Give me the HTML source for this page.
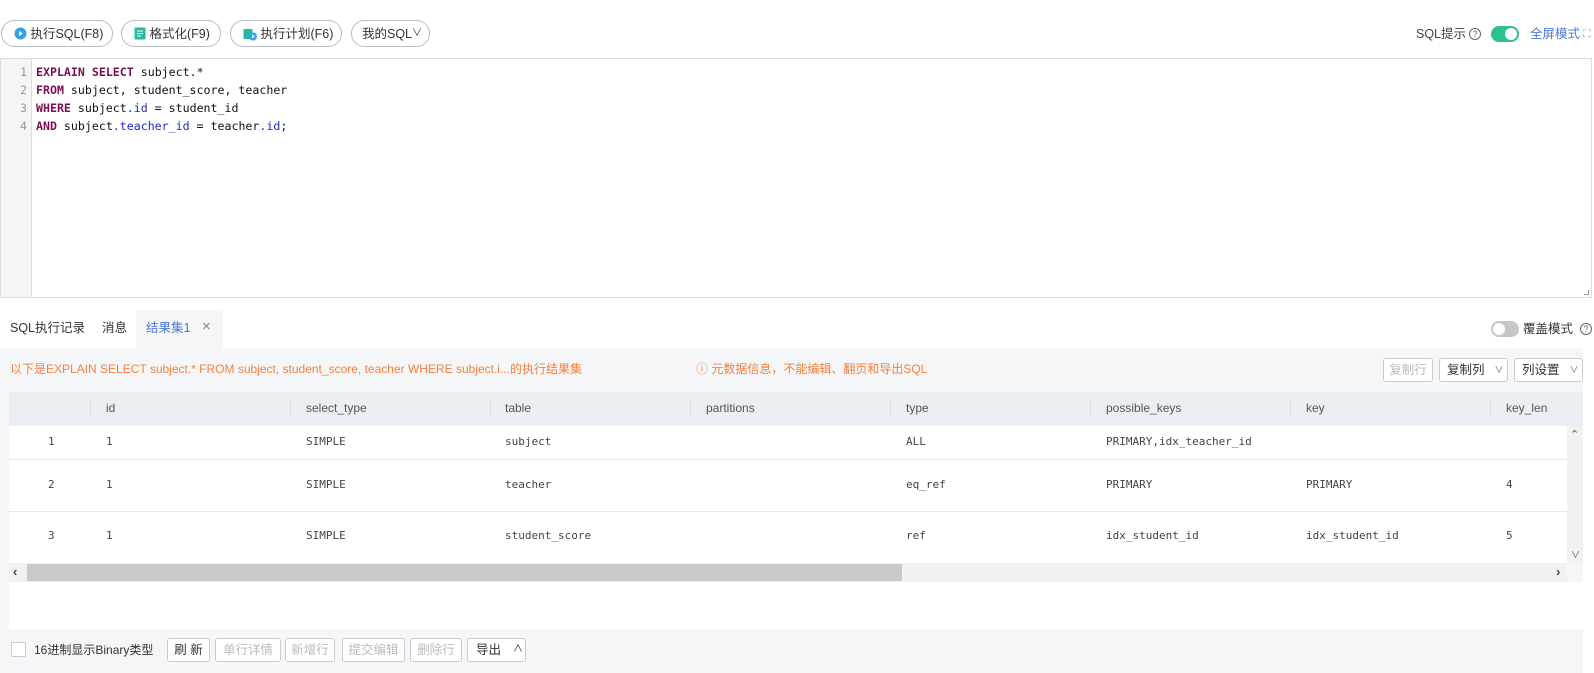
<!DOCTYPE html><html><head><meta charset="utf-8"><style>
*{box-sizing:border-box;margin:0;padding:0}
body{width:1594px;height:673px;background:#fff;font-family:"Liberation Sans","Noto Sans CJK SC",sans-serif;font-size:12px;color:#333;position:relative;overflow:hidden}
.a{position:absolute;white-space:nowrap;line-height:14px}
.btn{position:absolute;top:20px;height:27px;border:1px solid #b8bcc4;border-radius:14px;font-size:12.5px;color:#333;display:flex;align-items:center;padding-left:12px;line-height:14px}
.editor{left:0;top:58px;width:1592px;height:240px;border:1px solid #ddd}
.gut{position:absolute;left:0;top:0;width:31px;height:100%;background:#f5f5f5;border-right:1px solid #ddd}
.code{font-family:"DejaVu Sans Mono","Liberation Mono",monospace;font-size:11.6px;line-height:18px}
.k{color:#7a0f52;font-weight:bold}.b{color:#1a2bc8}
.sb{position:absolute;height:24px;border:1px solid #c8ccd2;border-radius:3px;background:#fff;display:flex;align-items:center;font-size:12.5px;line-height:14px}
.th{color:#555;font-size:12px}
.cell{font-family:"DejaVu Sans Mono","Liberation Mono",monospace;font-size:11px;color:#444}
.sep{position:absolute;top:400px;width:1px;height:18px;background:#dde0e5}
</style></head><body>
<div class="btn" style="left:1px;width:112px"><svg width="13" height="13" viewBox="0 0 13 13"><circle cx="6.5" cy="6.5" r="6" fill="#2fa6e8"/><path d="M5 4l4 2.5-4 2.5z" fill="#fff"/></svg>&nbsp;执行SQL(F8)</div>
<div class="btn" style="left:121px;width:100px"><svg width="12" height="13"><rect x="0.5" y="0.5" width="11" height="12" rx="1" fill="#2bbaa0"/><path d="M3 4h6M3 6.5h6M3 9h4" stroke="#fff"/></svg>&nbsp;格式化(F9)</div>
<div class="btn" style="left:230px;width:112px"><svg width="14" height="14"><rect x="0.5" y="2" width="9" height="10" rx="1" fill="#2bb5a8"/><circle cx="10" cy="9.5" r="4" fill="#2fa6e8"/><path d="M9 7.5l3 2-3 2z" fill="#fff"/></svg>&nbsp;执行计划(F6)</div>
<div class="btn" style="left:351px;width:79px;padding-left:10px">我的SQL<span style="font-size:10px">∨</span></div>
<div class="a" style="left:1416px;top:27px;font-size:12.5px;color:#444">SQL提示</div>
<div class="a" style="left:1469px;top:28px;width:12px;height:12px;border:1px solid #666;border-radius:50%;font-size:9px;text-align:center;line-height:10px;color:#666">?</div>
<div class="a" style="left:1491px;top:26px;width:28px;height:16px;border-radius:8px;background:#2ebf93"><div style="position:absolute;right:2px;top:2px;width:12px;height:12px;border-radius:50%;background:#fff"></div></div>
<div class="a" style="left:1530px;top:27px;font-size:12.5px;color:#4a78d8">全屏模式</div>
<div class="a" style="left:1583px;top:27px;color:#8aa8e0;font-size:11px">⛶</div>
<div class="a editor"><div class="gut"></div>
<div class="a code" style="left:0;top:4px;width:26px;text-align:right;color:#999;line-height:18px">1<br>2<br>3<br>4</div>
<div class="a code" style="left:35px;top:4px;color:#111;line-height:18px"><span class="k">EXPLAIN</span> <span class="k">SELECT</span> subject.*<br><span class="k">FROM</span> subject, student_score, teacher<br><span class="k">WHERE</span> subject<span class="b">.id</span> = student_id<br><span class="k">AND</span> subject<span class="b">.teacher_id</span> = teacher<span class="b">.id</span>;</div>
<div class="a" style="right:2px;bottom:2px;width:5px;height:5px;border-right:1px solid #999;border-bottom:1px solid #999"></div></div>
<div class="a" style="left:136px;top:310px;width:87px;height:38px;background:#f5f6f8"></div>
<div class="a" style="left:10px;top:321px;font-size:12.5px;color:#333">SQL执行记录</div>
<div class="a" style="left:102px;top:321px;font-size:12.5px;color:#333">消息</div>
<div class="a" style="left:146px;top:321px;font-size:12.5px;color:#4a78d8">结果集1</div>
<div class="a" style="left:202px;top:320px;font-size:15px;color:#888">×</div>
<div class="a" style="left:1491px;top:321px;width:28px;height:16px;border-radius:8px;background:#c6c6c6"><div style="position:absolute;left:2px;top:2px;width:12px;height:12px;border-radius:50%;background:#fff"></div></div>
<div class="a" style="left:1523px;top:322px;font-size:12.5px">覆盖模式</div>
<div class="a" style="left:1580px;top:323px;width:12px;height:12px;border:1px solid #666;border-radius:50%;font-size:9px;text-align:center;line-height:10px;color:#666">?</div>
<div class="a" style="left:0;top:348px;width:1583px;height:325px;background:#f5f6f8"></div>
<div class="a" style="left:10px;top:362px;color:#f5803e;font-size:12px">以下是EXPLAIN SELECT subject.* FROM subject, student_score, teacher WHERE subject.i...的执行结果集</div>
<div class="a" style="left:696px;top:362px;color:#f5803e;font-size:12px">ⓘ 元数据信息，不能编辑、翻页和导出SQL</div>
<div class="sb" style="left:1383px;top:358px;width:50px;color:#bbb;justify-content:center">复制行</div>
<div class="sb" style="left:1439px;top:358px;width:69px;padding-left:7px">复制列 <span style="margin-left:10px;font-size:9px;color:#666">∨</span></div>
<div class="sb" style="left:1514px;top:358px;width:69px;padding-left:7px">列设置 <span style="margin-left:10px;font-size:9px;color:#666">∨</span></div>
<div class="a" style="left:9px;top:392px;width:1574px;height:34px;background:#ebeef2"></div>
<div class="sep" style="left:90px"></div><div class="sep" style="left:290px"></div><div class="sep" style="left:490px"></div><div class="sep" style="left:690px"></div><div class="sep" style="left:890px"></div><div class="sep" style="left:1090px"></div><div class="sep" style="left:1290px"></div><div class="sep" style="left:1490px"></div>
<div class="a th" style="left:106px;top:401px">id</div><div class="a th" style="left:306px;top:401px">select_type</div><div class="a th" style="left:505px;top:401px">table</div><div class="a th" style="left:706px;top:401px">partitions</div><div class="a th" style="left:906px;top:401px">type</div><div class="a th" style="left:1106px;top:401px">possible_keys</div><div class="a th" style="left:1306px;top:401px">key</div><div class="a th" style="left:1506px;top:401px">key_len</div>
<div class="a" style="left:9px;top:426px;width:1558px;height:137px;background:#fff"></div>
<div class="a" style="left:9px;top:459px;width:1558px;height:1px;background:#e8eaed"></div>
<div class="a" style="left:9px;top:511px;width:1558px;height:1px;background:#e8eaed"></div>
<div class="a" style="left:1567px;top:426px;width:16px;height:137px;background:#f1f1f1"></div>
<div class="a" style="left:1570px;top:428px;font-size:11px;color:#555">⌃</div>
<div class="a" style="left:1571px;top:548px;font-size:9px;color:#555">∨</div>
<div class="a cell" style="left:48px;top:435px">1</div><div class="a cell" style="left:106px;top:435px">1</div><div class="a cell" style="left:306px;top:435px">SIMPLE</div><div class="a cell" style="left:505px;top:435px">subject</div><div class="a cell" style="left:906px;top:435px">ALL</div><div class="a cell" style="left:1106px;top:435px">PRIMARY,idx_teacher_id</div>
<div class="a cell" style="left:48px;top:478px">2</div><div class="a cell" style="left:106px;top:478px">1</div><div class="a cell" style="left:306px;top:478px">SIMPLE</div><div class="a cell" style="left:505px;top:478px">teacher</div><div class="a cell" style="left:906px;top:478px">eq_ref</div><div class="a cell" style="left:1106px;top:478px">PRIMARY</div><div class="a cell" style="left:1306px;top:478px">PRIMARY</div><div class="a cell" style="left:1506px;top:478px">4</div>
<div class="a cell" style="left:48px;top:529px">3</div><div class="a cell" style="left:106px;top:529px">1</div><div class="a cell" style="left:306px;top:529px">SIMPLE</div><div class="a cell" style="left:505px;top:529px">student_score</div><div class="a cell" style="left:906px;top:529px">ref</div><div class="a cell" style="left:1106px;top:529px">idx_student_id</div><div class="a cell" style="left:1306px;top:529px">idx_student_id</div><div class="a cell" style="left:1506px;top:529px">5</div>
<div class="a" style="left:9px;top:563px;width:1558px;height:19px;background:#f1f1f1"></div>
<div class="a" style="left:27px;top:564px;width:875px;height:17px;background:#c9c9c9"></div>
<div class="a" style="left:13px;top:565px;font-size:13px;color:#444;font-weight:bold">‹</div>
<div class="a" style="left:1556px;top:565px;font-size:13px;color:#444;font-weight:bold">›</div>
<div class="a" style="left:9px;top:582px;width:1574px;height:47px;background:#fff"></div>
<div class="a" style="left:11px;top:642px;width:15px;height:15px;border:1px solid #c8ccd2;border-radius:2px;background:#fff"></div>
<div class="a" style="left:34px;top:643px;font-size:12px">16进制显示Binary类型</div>
<div class="sb" style="left:167px;top:638px;width:43px;justify-content:center">刷 新</div>
<div class="sb" style="left:215px;top:638px;width:66px;justify-content:center;color:#bbb">单行详情</div>
<div class="sb" style="left:285px;top:638px;width:50px;justify-content:center;color:#bbb">新增行</div>
<div class="sb" style="left:342px;top:638px;width:63px;justify-content:center;color:#bbb">提交编辑</div>
<div class="sb" style="left:410px;top:638px;width:52px;justify-content:center;color:#bbb">删除行</div>
<div class="sb" style="left:467px;top:638px;width:59px;padding-left:8px">导出 <span style="margin-left:12px;font-size:10px">∧</span></div>
</body></html>
